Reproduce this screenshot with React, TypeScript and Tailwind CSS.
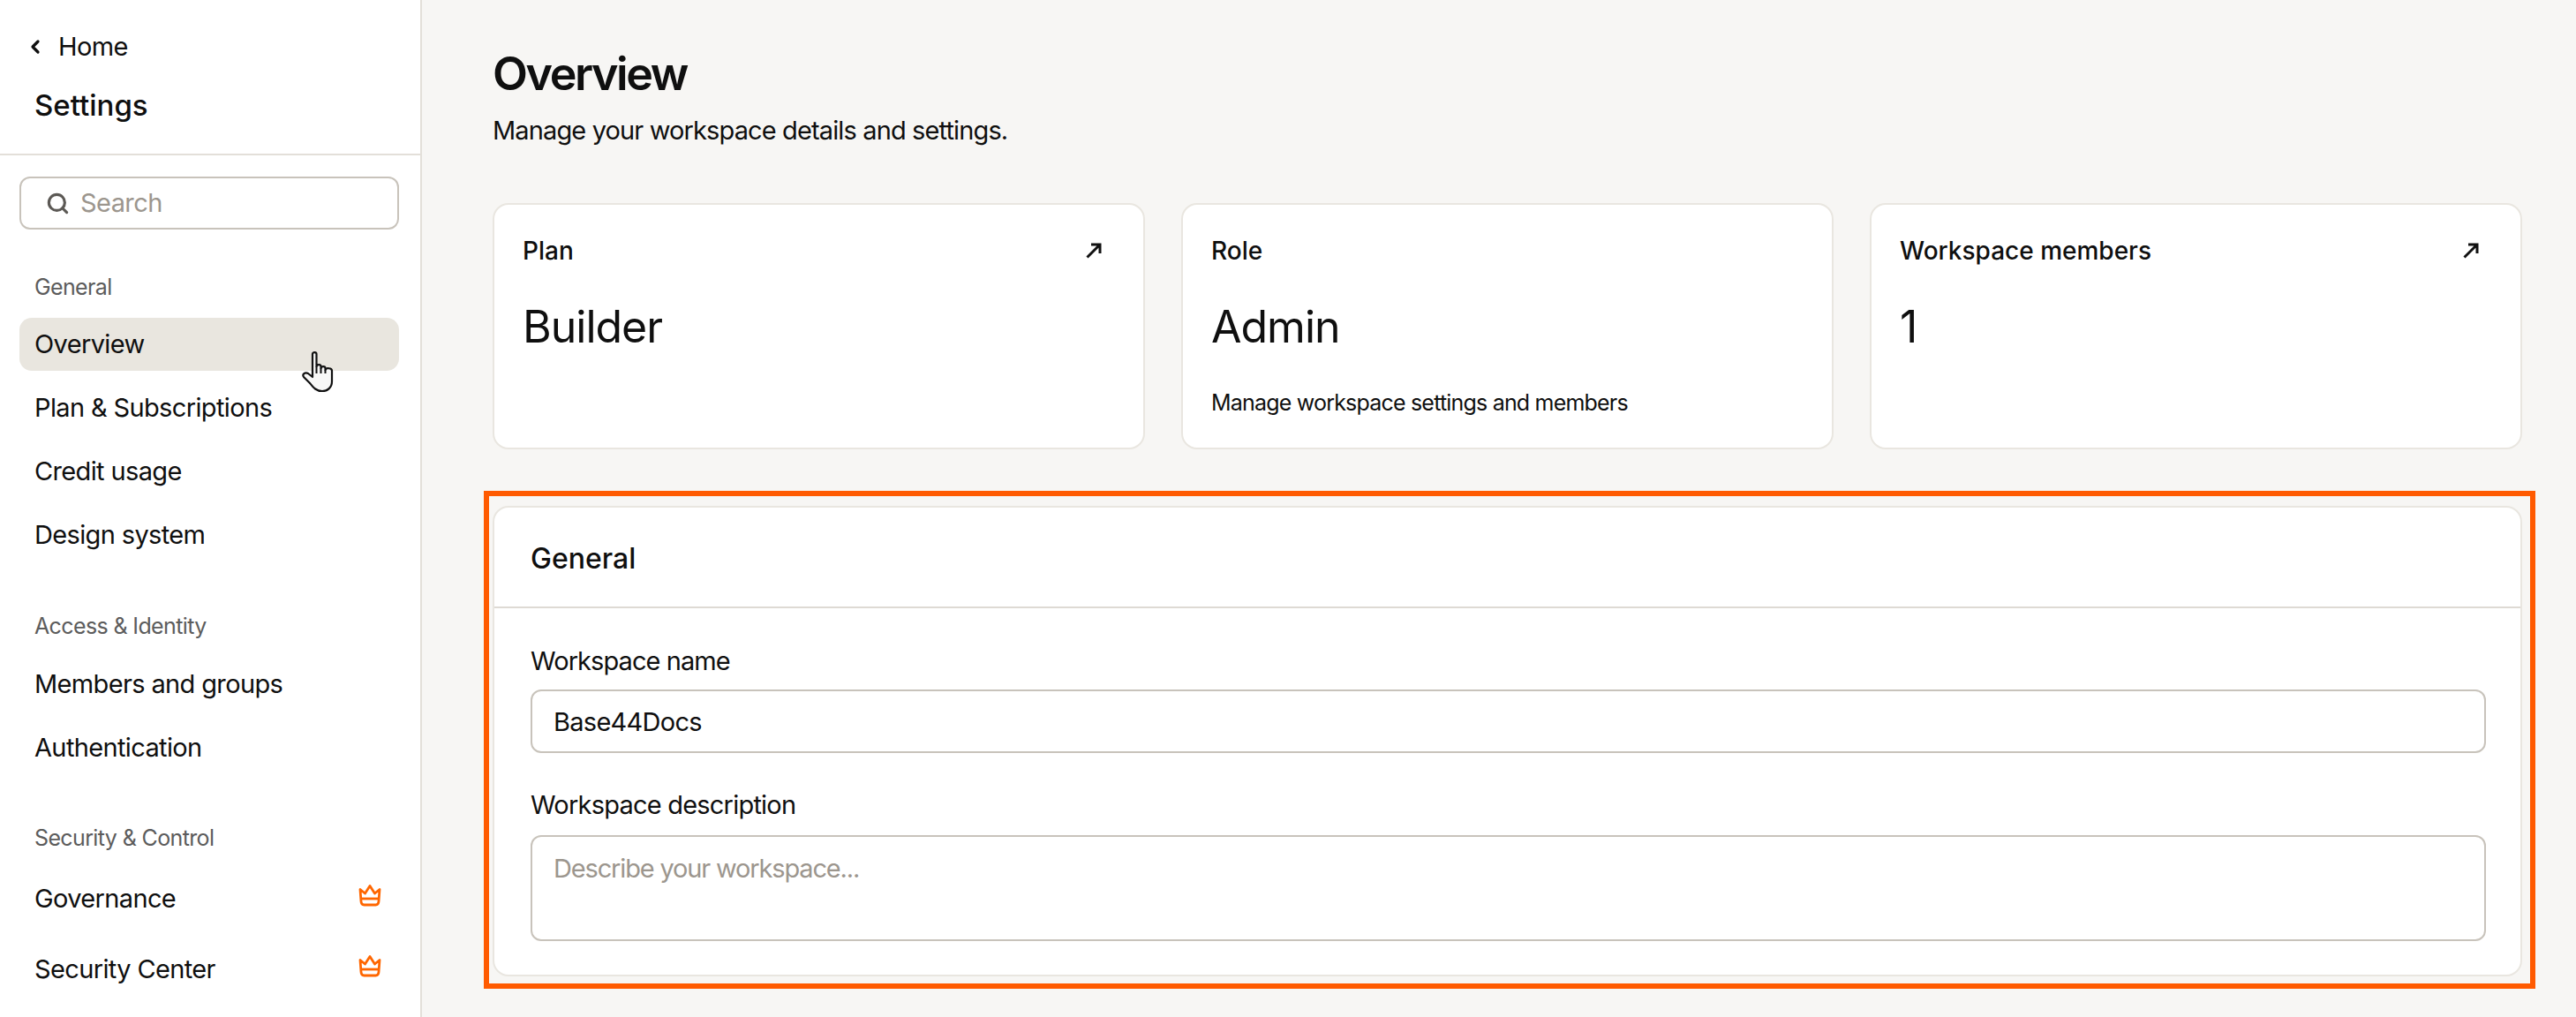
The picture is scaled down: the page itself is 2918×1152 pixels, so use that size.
import { ChevronLeft, Search } from "lucide-react";

const font = "font-['Inter',sans-serif]";

const Crown = () => (
  <svg width="26" height="26" viewBox="0 0 26 26" fill="none" stroke="#ff6600" strokeWidth="2.8" strokeLinejoin="round" className="-translate-y-[4px]">
    <path d="M2 6.5 L7.5 11 L13 2.5 L18.5 11 L24 6.5 L23 20 Q22.8 24 19.5 24 H6.5 Q3.2 24 3 20 Z" />
    <path d="M3 17 H23" />
  </svg>
);

const HandCursor = () => (
  <svg width="38" height="48" viewBox="0 0 38 48" className="absolute left-[342px] top-[397px]">
    <path
      d="M12 4 C12 1.5 16.5 1.5 16.5 4 V18 C17 15.5 21.5 15.5 21.5 18 V20 C22 17.5 26.5 17.5 26.5 20 V22 C27 19.5 34 19.5 34 23 V35 C34 42 29 46 23 46 C16 46 13 42 9 37 L2 30 C0 27 3.5 24 7 26 L12 30 Z"
      fill="#f8f8f7"
      stroke="#111"
      strokeWidth="2.2"
      strokeLinejoin="round"
    />
    <path d="M16.5 18 V26 M21.5 20 V26 M26.5 22 V26" stroke="#111" strokeWidth="2" />
  </svg>
);

const ArrowUpRight = () => (
  <svg width="20" height="20" viewBox="0 0 20 20" fill="none" stroke="#111" strokeWidth="3">
    <path d="M2.5 17.5 L16 4 M7 3 H17 V13" />
  </svg>
);

const sections = [
  { title: "General", items: ["Overview", "Plan & Subscriptions", "Credit usage", "Design system"] },
  { title: "Access & Identity", items: ["Members and groups", "Authentication"] },
];

const stats = [
  { label: "Plan", value: "Builder", link: true },
  { label: "Role", value: "Admin", note: "Manage workspace settings and members" },
  { label: "Workspace members", value: "1", link: true },
];

export default function App() {
  return (
    <div className={`relative flex h-screen w-full overflow-hidden bg-[#f7f6f4] text-[#0f0f0f] ${font}`}>
      <aside className="h-full w-[478px] shrink-0 border-r-2 border-[#e3dfd9] bg-white">
        <div className="h-[176px] border-b-2 border-[#e3dfd9] pl-[39px] pt-[36px]">
          <div className="-ml-[6px] flex items-center gap-[14px] text-[29px] leading-[34px] tracking-[-0.02em]">
            <ChevronLeft size={24} strokeWidth={3.2} className="-ml-[5px]" />
            <span>Home</span>
          </div>
          <div className="mt-[30px] text-[33px] font-medium leading-[38px]">Settings</div>
        </div>

        <div className="pl-[22px] pr-[24px]">
          <div className="mt-[24px] flex h-[60px] items-center gap-[12px] rounded-[12px] border-2 border-[#c8c3bb] pl-[28px] text-[29px] tracking-[-0.02em] text-[#9c968e]">
            <Search size={27} strokeWidth={2.8} className="text-[#5c5955]" />
            <span>Search</span>
          </div>

          {sections.map((s, i) => (
            <div key={s.title} className={i === 0 ? "mt-[50px]" : "mt-[58px]"}>
              <div className="pl-[17px] text-[25px] leading-[30px] tracking-[-0.025em] text-[#5c5c5c]">{s.title}</div>
              <div className={i === 0 ? "mt-[20px]" : "mt-[21px]"}>
                {s.items.map((item, j) => (
                  <div
                    key={item}
                    className={`flex h-[60px] items-center rounded-[14px] pl-[17px] text-[29px] tracking-[-0.022em] ${j > 0 ? "mt-[12px]" : ""} ${item === "Overview" ? "bg-[#e9e6df]" : ""}`}
                  >
                    {item}
                  </div>
                ))}
              </div>
            </div>
          ))}

          <div className="mt-[57px]">
            <div className="pl-[17px] text-[25px] leading-[30px] tracking-[-0.025em] text-[#5c5c5c]">Security &amp; Control</div>
            <div className="mt-[24px] flex h-[60px] items-center justify-between pl-[17px] pr-[20px] text-[29px] tracking-[-0.022em]">
              <span>Governance</span>
              <Crown />
            </div>
            <div className="mt-[20px] flex h-[60px] items-center justify-between pl-[17px] pr-[20px] text-[29px] tracking-[-0.022em]">
              <span>Security Center</span>
              <Crown />
            </div>
          </div>
        </div>
      </aside>

      <main className="min-w-0 flex-1 pl-[80px] pr-[61px]">
        <h1 className="mt-[52px] text-[52px] font-semibold leading-[64px] tracking-[-0.047em]">Overview</h1>
        <p className="mt-[14px] text-[29px] leading-[36px] tracking-[-0.03em]">Manage your workspace details and settings.</p>

        <div className="mt-[64px] grid grid-cols-3 gap-[41px]">
          {stats.map((c) => (
            <div key={c.label} className="h-[279px] rounded-[18px] border-2 border-[#e9e6e0] bg-white px-[32px] pt-[34px]">
              <div className="flex h-[36px] items-center justify-between pr-[14px]">
                <span className="text-[28px] font-medium">{c.label}</span>
                {c.link && <ArrowUpRight />}
              </div>
              <div className="mt-[38px] text-[50px] leading-[60px] tracking-[-0.02em]">{c.value}</div>
              {c.note && <div className="mt-[40px] text-[25px] leading-[32px] tracking-[-0.032em]">{c.note}</div>}
            </div>
          ))}
        </div>

        <section className="mt-[64px] h-[533px] rounded-[18px] border-2 border-[#e9e6e0] bg-white">
          <div className="flex h-[114px] items-center border-b-2 border-[#dedad4] pl-[41px] pt-[3px] text-[32px] font-medium">
            General
          </div>
          <div className="pl-[41px] pr-[39px] pt-[42px]">
            <label className="block text-[29px] leading-[36px] tracking-[-0.032em]">Workspace name</label>
            <div className="mt-[14px] flex h-[72px] items-center rounded-[12px] border-2 border-[#c8c3bb] pl-[24px] pt-[2px] text-[29px] tracking-[-0.025em]">
              Base44Docs
            </div>
            <label className="mt-[41px] block text-[29px] leading-[36px] tracking-[-0.027em]">Workspace description</label>
            <div className="mt-[16px] h-[120px] rounded-[12px] border-2 border-[#c8c3bb] pl-[24px] pt-[18px] text-[29px] leading-[36px] tracking-[-0.04em] text-[#9c968e]">
              Describe your workspace...
            </div>
          </div>
        </section>
      </main>

      {/* annotation drawn over the screenshot */}
      <div className="absolute left-[548px] top-[556px] h-[564px] w-[2324px] border-[6px] border-[#ff5a00]" />
      <HandCursor />
    </div>
  );
}
